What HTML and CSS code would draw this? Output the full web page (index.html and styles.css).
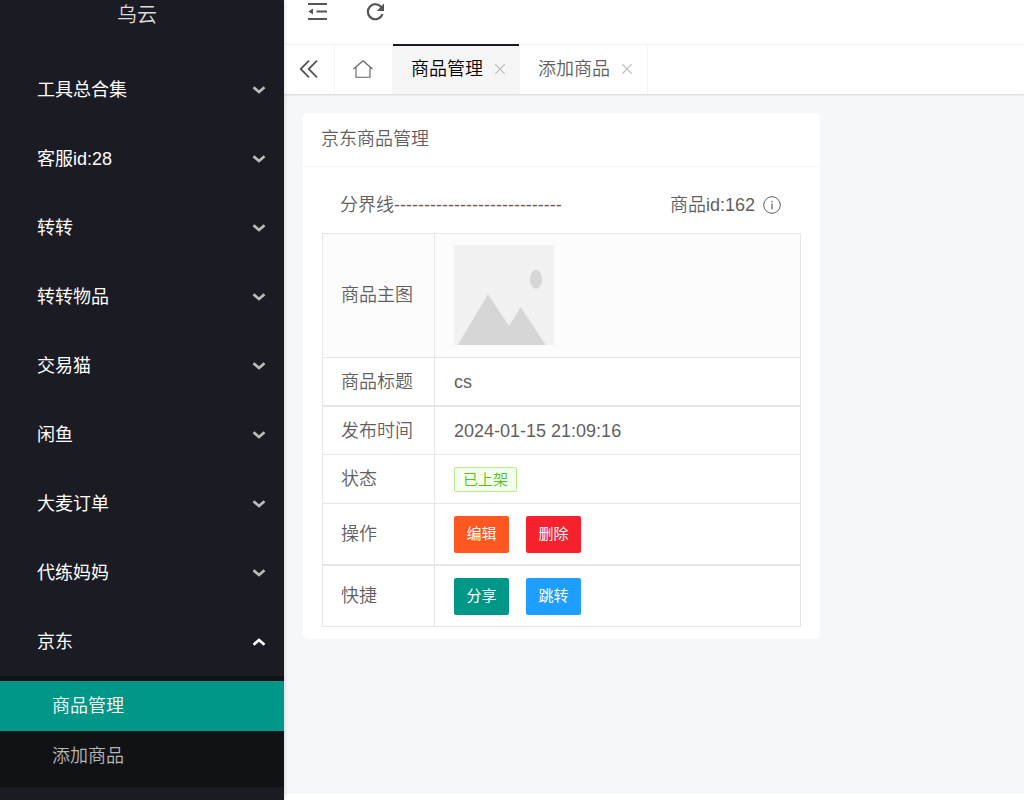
FILE: index.html
```html
<!DOCTYPE html>
<html lang="zh-CN">
<head>
<meta charset="utf-8">
<meta name="viewport" content="width=device-width, initial-scale=1">
<title>京东商品管理</title>
<link rel="stylesheet" href="styles.css">
</head>
<body>
<svg class="defs" aria-hidden="true">
  <symbol id="chevron" viewBox="0 0 14 8"><path d="M1.5 1.2 7 6 12.5 1.2" fill="none" stroke="currentColor" stroke-width="2.7"/></symbol>
  <symbol id="cross" viewBox="0 0 10 10"><path d="M.3 .3 9.700 9.700M9.700 .3 .3 9.700" fill="none" stroke="currentColor" stroke-width="1.200"/></symbol>
</svg>
<div class="layout">
  <aside class="sidebar">
    <div class="logo">乌云</div>
    <nav>
      <ul class="menu">
        <li><button class="menu-item">工具总合集<svg class="chevron"><use href="#chevron"/></svg></button></li>
        <li><button class="menu-item">客服id:28<svg class="chevron"><use href="#chevron"/></svg></button></li>
        <li><button class="menu-item">转转<svg class="chevron"><use href="#chevron"/></svg></button></li>
        <li><button class="menu-item">转转物品<svg class="chevron"><use href="#chevron"/></svg></button></li>
        <li><button class="menu-item">交易猫<svg class="chevron"><use href="#chevron"/></svg></button></li>
        <li><button class="menu-item">闲鱼<svg class="chevron"><use href="#chevron"/></svg></button></li>
        <li><button class="menu-item">大麦订单<svg class="chevron"><use href="#chevron"/></svg></button></li>
        <li><button class="menu-item">代练妈妈<svg class="chevron"><use href="#chevron"/></svg></button></li>
        <li>
          <button class="menu-item" aria-expanded="true">京东<svg class="chevron chevron-up"><use href="#chevron"/></svg></button>
          <ul class="submenu">
            <li><a class="submenu-item active" href="#manage">商品管理</a></li>
            <li><a class="submenu-item" href="#add">添加商品</a></li>
          </ul>
        </li>
      </ul>
    </nav>
  </aside>
  <div class="main">
    <header class="toolbar">
      <button class="icon-button" aria-label="收起菜单">
        <svg width="20" height="18" viewBox="0 0 20 18" fill="currentColor"><path d="M0 0h19v2H0zM8.500 7.600h10.500v2H8.500zM0 15h19v2H0zM5 5.400v6L.3 8.400z"/></svg>
      </button>
      <button class="icon-button" aria-label="刷新">
        <svg width="20" height="18" viewBox="0 0 20 18"><path d="M15.400 4.200A7.500 7.500 0 1 0 16.500 11.200" fill="none" stroke="currentColor" stroke-width="2.200"/><path d="M18 .5V8H10.800z" fill="currentColor"/></svg>
      </button>
    </header>
    <nav class="tabs">
      <button class="tab-button tab-prev" aria-label="向左">
        <svg width="20" height="18" viewBox="0 0 20 18"><path d="M10 .7 1.700 9 10 17.300M18 .7 9.700 9 18 17.300" fill="none" stroke="currentColor" stroke-width="1.800"/></svg>
      </button>
      <a class="tab-button tab-home" href="#home" aria-label="首页">
        <svg width="20" height="18" viewBox="0 0 20 18"><path d="M.5 9 10 .8 19.500 9M3 7V17.300H17V7" fill="none" stroke="currentColor" stroke-width="1.100"/></svg>
      </a>
      <div class="tab active"><a href="#manage">商品管理</a><button class="tab-close" aria-label="关闭商品管理"><svg width="10" height="10"><use href="#cross"/></svg></button></div>
      <div class="tab"><a href="#add">添加商品</a><button class="tab-close" aria-label="关闭添加商品"><svg width="10" height="10"><use href="#cross"/></svg></button></div>
    </nav>
    <main class="content">
      <section class="card">
        <h1 class="card-title">京东商品管理</h1>
        <div class="card-body">
          <div class="summary">
            <span>分界线----------------------------</span>
            <span class="product-id">商品id:162
              <svg width="18" height="18" viewBox="0 0 18 18" aria-hidden="true"><circle cx="9" cy="9" r="8.300" fill="none" stroke="currentColor"/><path d="M9 7.500V13.300M9 4.800V6.200" stroke="currentColor" stroke-width="1.200"/></svg>
            </span>
          </div>
          <table class="details">
            <tbody>
              <tr class="row-image">
                <th scope="row">商品主图</th>
                <td><svg class="picture" width="100" height="100" viewBox="0 0 100 100" role="img" aria-label="商品主图"><path fill="#f1f1f1" d="M0 0h100v100H0z"/><path fill="#d6d6d6" d="M3.700 100 34 49.300 55 81 66.700 62 91.700 100z"/><ellipse cx="82" cy="34.300" rx="6" ry="9.500" fill="#d6d6d6"/></svg></td>
              </tr>
              <tr class="group-end"><th scope="row">商品标题</th><td>cs</td></tr>
              <tr class="row-time"><th scope="row">发布时间</th><td>2024-01-15 21:09:16</td></tr>
              <tr><th scope="row">状态</th><td><span class="badge">已上架</span></td></tr>
              <tr class="row-actions group-end">
                <th scope="row">操作</th>
                <td><div class="actions"><button class="btn btn-edit">编辑</button><button class="btn btn-delete">删除</button></div></td>
              </tr>
              <tr class="row-actions">
                <th scope="row">快捷</th>
                <td><div class="actions"><button class="btn btn-share">分享</button><button class="btn btn-jump">跳转</button></div></td>
              </tr>
            </tbody>
          </table>
        </div>
      </section>
    </main>
  </div>
</div>
</body>
</html>
```
FILE: styles.css
```css
* {
  box-sizing: border-box;
}

body {
  margin: 0;
  font: 350 18px/30px "Liberation Sans", "Noto Sans CJK SC", sans-serif;
  color: #5f5f5f;
  background: #fff;
}

button {
  margin: 0;
  padding: 0;
  border: 0;
  background: none;
  font: inherit;
  color: inherit;
  cursor: pointer;
}

a {
  color: inherit;
  text-decoration: none;
}

ul {
  margin: 0;
  padding: 0;
  list-style: none;
}

svg {
  display: block;
  flex: none;
}

.defs {
  position: absolute;
  width: 0;
  height: 0;
}

.layout {
  display: flex;
  min-height: 100vh;
}

/* Sidebar */
.sidebar {
  flex: none;
  z-index: 2;
  width: 284px;
  background: #1b1b24;
  box-shadow: 1px 0 4px rgba(0, 0, 0, 0.12);
}

.logo {
  padding-right: 10px;
  height: 55px;
  font-size: 20px;
  line-height: 30px;
  text-align: center;
  color: #dcdcde;
}

.menu-item {
  display: flex;
  align-items: center;
  justify-content: space-between;
  width: 100%;
  height: 69px;
  padding: 0 18px 0 37px;
  color: #fff;
  font-weight: 400;
}

.chevron {
  width: 14px;
  height: 8px;
  color: #bbb;
}

.chevron-up {
  color: #fff;
  transform: rotate(180deg);
}

.submenu {
  padding: 5px 0 6px;
  background: #111216;
}

.submenu-item {
  display: block;
  padding-left: 52px;
  line-height: 50px;
  color: #b8b8b9;
}

.submenu-item.active {
  background: #009688;
  color: #fff;
}

/* Main column */
.main {
  flex: 1;
  display: flex;
  flex-direction: column;
  min-width: 0;
  padding-bottom: 6px;
}

.toolbar {
  display: flex;
  align-items: flex-start;
  gap: 38px;
  height: 44px;
  padding: 3px 24px;
  color: #555;
}

.tabs {
  display: flex;
  z-index: 1;
  height: 50px;
  background: #fff;
  box-shadow: 0 1px 2px rgba(0, 0, 0, 0.14), inset 0 1px #f4f4f4;
  color: #5f5f5f;
}

.tab-button {
  display: flex;
  align-items: center;
  justify-content: center;
  border-right: 1px solid #f4f4f4;
}

.tab-prev {
  width: 51px;
  color: #555;
}

.tab-home {
  width: 58px;
  padding-right: 2px;
}

.tab {
  display: flex;
  align-items: center;
  gap: 12px;
  padding: 0 15px 0 18px;
  border-right: 1px solid #f4f4f4;
}

.tab.active {
  padding-right: 14px;
  background: #f5f5f5;
  box-shadow: inset 0 2px #1b1b24;
  color: #000;
}

.tab-close {
  color: #bbb;
}

.tab-close svg {
  margin-bottom: 1px;
}

.content {
  flex: 1;
  padding: 19px;
  background: #f5f7f9;
}

/* Card */
.card {
  max-width: 517px;
  border-radius: 5px;
  background: #fff;
}

.card-title {
  margin: 0;
  padding: 0 18px;
  border-bottom: 1px solid #f6f6f6;
  font-size: 18px;
  font-weight: 350;
  line-height: 53px;
}

.card-body {
  padding: 12px 19px;
}

.summary {
  display: flex;
  justify-content: space-between;
  padding: 11px 20px 13px 18px;
}

.product-id {
  display: flex;
  align-items: center;
  gap: 8px;
}

.details {
  width: 100%;
  border-spacing: 0;
  border: solid #e6e6e6;
  border-width: 1px 0 0 1px;
}

.details th,
.details td {
  height: 49px;
  padding: 0 18px;
  border: solid #e6e6e6;
  border-width: 0 1px 1px 0;
  font-weight: 350;
  text-align: left;
}

.details th {
  width: 112px;
  white-space: nowrap;
}

.details td {
  padding-left: 19px;
}

.details .group-end th,
.details .group-end td {
  border-bottom-width: 2px;
}

.details .row-image th,
.details .row-image td {
  height: 124px;
  padding-bottom: 1px;
  background: #fcfcfc;
}

.details .row-time th,
.details .row-time td {
  height: 48px;
}

.details .row-actions th,
.details .row-actions td {
  height: 61px;
}

.details .row-actions.group-end th,
.details .row-actions.group-end td {
  height: 62px;
}

.badge {
  display: block;
  width: fit-content;
  padding: 0 8px;
  border: 1px solid #b7eb8f;
  border-radius: 2px;
  background: #f6ffed;
  font-size: 15px;
  line-height: 23px;
  color: #52c41a;
}

.actions {
  display: flex;
  gap: 17px;
}

.btn {
  min-width: 55px;
  height: 37px;
  padding: 0 12px;
  border-radius: 2px;
  font-size: 15px;
  font-weight: 400;
  color: #fff;
}

.btn-edit {
  background: #ff5722;
}

.btn-delete {
  background: #f5222d;
}

.btn-share {
  background: #009688;
}

.btn-jump {
  background: #1e9fff;
}
```
